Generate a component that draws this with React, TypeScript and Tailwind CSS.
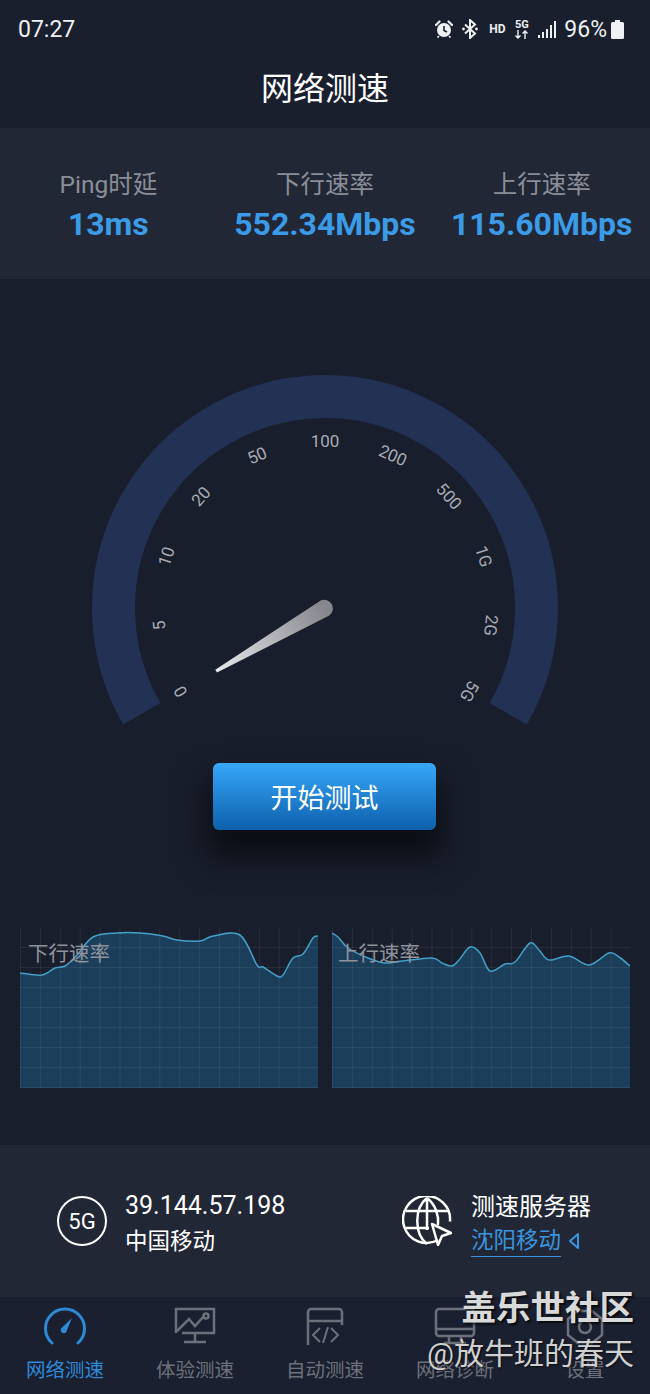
const DOWN_POINTS: [number, number][] = [
  [0, 45], [22, 47], [35, 40], [45, 38], [57, 27], [73, 9], [97, 5], [120, 5], [143, 8], [157, 12],
  [180, 13], [193, 8], [220, 7], [237, 37], [243, 39], [257, 48], [263, 47], [273, 30], [283, 26], [293, 10], [298, 8],
];

const UP_POINTS: [number, number][] = [
  [0, 5], [6, 9], [16, 20], [36, 30], [53, 35], [70, 33], [100, 30], [110, 35], [120, 38], [127, 32],
  [138, 19], [148, 25], [158, 43], [173, 36], [183, 34], [198, 15], [207, 22], [217, 32], [237, 28], [257, 37],
  [277, 25], [287, 29], [298, 38],
];

const GAUGE_LABELS = ['0', '5', '10', '20', '50', '100', '200', '500', '1G', '2G', '5G'];

function smoothPath(pts: [number, number][]) {
  let d = `M${pts[0][0]},${pts[0][1]}`;
  for (let i = 0; i < pts.length - 1; i++) {
    const p0 = pts[Math.max(i - 1, 0)];
    const p1 = pts[i];
    const p2 = pts[i + 1];
    const p3 = pts[Math.min(i + 2, pts.length - 1)];
    const c1x = p1[0] + (p2[0] - p0[0]) / 6;
    const c1y = p1[1] + (p2[1] - p0[1]) / 6;
    const c2x = p2[0] - (p3[0] - p1[0]) / 6;
    const c2y = p2[1] - (p3[1] - p1[1]) / 6;
    d += ` C${c1x},${c1y} ${c2x},${c2y} ${p2[0]},${p2[1]}`;
  }
  return d;
}

function StatusIcons() {
  return (
    <div className="flex items-center text-[#eef0f3]">
      <svg width="18" height="18" viewBox="0 0 18 18" className="mr-[9px]">
        <circle cx="9" cy="10" r="7" fill="currentColor" />
        <path d="M9 6v4.5l3 1.5" fill="none" stroke="#1a1f2e" strokeWidth="1.6" />
        <path d="M1 5l3.5-3.5M17 5l-3.5-3.5" stroke="currentColor" strokeWidth="2.2" strokeLinecap="round" />
        <path d="M4 16l-1.5 1.5M14 16l1.5 1.5" stroke="currentColor" strokeWidth="1.6" />
      </svg>
      <svg width="16" height="20" viewBox="0 0 16 20" className="mr-[11px]">
        <path d="M3 5.5l10 9-5 4.5V1l5 4.5-10 9" fill="none" stroke="currentColor" strokeWidth="2" />
        <circle cx="1.5" cy="10" r="1.4" fill="currentColor" />
        <circle cx="14.5" cy="10" r="1.4" fill="currentColor" />
      </svg>
      <span className="mr-[9px] w-[16px] text-[12px] font-bold leading-none">HD</span>
      <div className="mr-[9px] flex w-[15px] flex-col items-center">
        <span className="text-[11px] font-bold leading-[11px]">5G</span>
        <svg width="15" height="9" viewBox="0 0 15 9">
          <path d="M4 0v8M1.5 5.5L4 8l2.5-2.5M11 9V1M8.500 3.500L11 1l2.500 2.500" fill="none" stroke="currentColor" strokeWidth="1.4" />
        </svg>
      </div>
      <svg width="18" height="17" viewBox="0 0 18 17" className="mr-[8px]" fill="currentColor">
        <rect x="0" y="14" width="2" height="3" />
        <rect x="4" y="11" width="2" height="6" />
        <rect x="8" y="8" width="2" height="9" />
        <rect x="12" y="4" width="2" height="13" />
        <rect x="16" y="0" width="2" height="17" />
      </svg>
      <span className="mr-[4px] text-[23px] leading-none">96%</span>
      <svg width="13" height="19" viewBox="0 0 13 19" fill="currentColor">
        <path d="M4 0h5v2h2.500A1.500 1.500 0 0 1 13 3.500V17.500A1.500 1.500 0 0 1 11.500 19H1.500A1.500 1.500 0 0 1 0 17.500V3.500A1.500 1.500 0 0 1 1.500 2H4z" />
      </svg>
    </div>
  );
}

function Stat({ label, value }: { label: string; value: string }) {
  return (
    <div className="flex flex-col items-center pt-[5px]">
      <span className="text-[24.500px] leading-[36px] text-[#8b8e97]">{label}</span>
      <span className="text-[32px] font-bold leading-[42px] text-[#3b9be6]">{value}</span>
    </div>
  );
}

function Gauge() {
  return (
    <svg width="490" height="380" viewBox="80 365 490 380" className="mx-auto mt-[86px] block">
      <defs>
        <linearGradient id="needle" gradientUnits="userSpaceOnUse" x1="216" y1="671" x2="325" y2="608">
          <stop offset="0" stopColor="#e6e8ee" />
          <stop offset="1" stopColor="#85878d" />
        </linearGradient>
      </defs>
      <path d="M141.8,713.75 A211.5 211.5 0 1 1 508.2,713.75" fill="none" stroke="#223154" strokeWidth="43" />
      {GAUGE_LABELS.map((label, i) => (
        <text
          key={label}
          x="325"
          y="447"
          textAnchor="middle"
          fontSize="17"
          fill="#a9acb4"
          transform={`rotate(${-120 + i * 24} 325 608)`}
        >
          {label}
        </text>
      ))}
      <path d="M217,672.500 L329.300,615.500 A8.700 8.700 0 0 0 320.700,600.500 L215.300,669.700 Z" fill="url(#needle)" />
    </svg>
  );
}

function Chart({ points, label, labelClass }: { points: [number, number][]; label: string; labelClass: string }) {
  const line = smoothPath(points);
  const verticals = Array.from({ length: 16 }, (_, i) => i * 19.9);
  const horizontals = Array.from({ length: 8 }, (_, i) => 20 + i * 20);
  return (
    <div className="relative h-[160px] w-[298px]">
      <svg width="298" height="160" viewBox="0 0 298 160" className="block">
        <path d={`${line} L298,160 L0,160 Z`} fill="#1b3e5a" />
        {verticals.map((x) => (
          <line key={x} x1={x + 0.5} y1="0" x2={x + 0.5} y2="160" stroke="#ffffff" strokeOpacity="0.07" />
        ))}
        {horizontals.map((y) => (
          <line key={y} x1="0" y1={y - 0.5} x2="298" y2={y - 0.5} stroke="#ffffff" strokeOpacity="0.07" />
        ))}
        <path d={line} fill="none" stroke="#459fc8" strokeWidth="1.5" />
      </svg>
      <span className={`absolute top-[12px] text-[20.500px] leading-[28px] text-[#8f939c] ${labelClass}`}>
        {label}
      </span>
    </div>
  );
}

function NavIcon({ index }: { index: number }) {
  if (index === 0) {
    return (
      <svg width="42" height="38" viewBox="0 0 42 38" fill="none" stroke="#2c8ad6" strokeWidth="3">
        <path d="M8 36A19.500 19.500 0 1 1 34 36" strokeLinecap="round" />
        <path d="M28 11L22 25.500A3.300 3.300 0 0 1 17 21.500Z" fill="#2c8ad6" stroke="none" />
      </svg>
    );
  }
  if (index === 1) {
    return (
      <svg width="42" height="38" viewBox="0 0 42 38" fill="none" stroke="#6d707a" strokeWidth="2.500">
        <path d="M2 26V2H40V26H8" />
        <path d="M21 27V34M10 35H32" />
        <path d="M3 24L15 12L21 19L30 9" />
        <circle cx="32" cy="9" r="2.500" />
      </svg>
    );
  }
  if (index === 2) {
    return (
      <svg width="38" height="38" viewBox="0 0 38 38" fill="none" stroke="#6d707a" strokeWidth="2.500">
        <path d="M2 38V5A3 3 0 0 1 5 2H33A3 3 0 0 1 36 5V18" />
        <path d="M2 14H36" />
        <path d="M17 21L10 28L17 35M28 21L35 28L28 35M20 36L25 20" strokeWidth="2" transform="translate(-3 0)" />
      </svg>
    );
  }
  if (index === 3) {
    return (
      <svg width="42" height="38" viewBox="0 0 42 38" fill="none" stroke="#6d707a" strokeWidth="2.500">
        <rect x="2" y="2" width="38" height="27" rx="3" />
        <path d="M2 22H40M15 30V35M27 30V35M10 36H32" />
      </svg>
    );
  }
  return (
    <svg width="38" height="38" viewBox="0 0 38 38" fill="none" stroke="#6d707a" strokeWidth="2.500">
      <path d="M12 4H26L36 12V28L26 36H12L2 28V12Z" strokeLinejoin="round" />
      <circle cx="19" cy="20" r="6" />
    </svg>
  );
}

const NAV_ITEMS = ['网络测速', '体验测速', '自动测速', '网络诊断', '设置'];

export default function App() {
  return (
    <div className="relative flex h-[1394px] w-[650px] flex-col overflow-hidden bg-[#191e2c] font-[family-name:Roboto,'Noto_Sans_CJK_SC',sans-serif]">
      <div className="h-[128px] bg-[#1a1f2e]">
        <div className="flex h-[58px] items-center justify-between pl-[18px] pr-[26px]">
          <span className="text-[23px] leading-none text-[#eef0f3]">07:27</span>
          <StatusIcons />
        </div>
        <div className="pt-[1px] text-center text-[32px] leading-[60px] text-white">网络测速</div>
      </div>

      <div className="grid h-[151px] grid-cols-3 items-center bg-[#222736]">
        <Stat label="Ping时延" value="13ms" />
        <Stat label="下行速率" value="552.34Mbps" />
        <Stat label="上行速率" value="115.60Mbps" />
      </div>

      <Gauge />

      <button className="ml-[213px] mt-[18px] h-[67px] w-[223px] rounded-[6px] bg-gradient-to-b from-[#37a8fa] to-[#0d60ac] pt-[6px] text-[27px] text-white shadow-[0_22px_30px_6px_rgba(0,0,0,0.55)]">
        开始测试
      </button>

      <div className="mt-[98px] flex justify-between px-[20px]">
        <Chart points={DOWN_POINTS} label="下行速率" labelClass="left-[8px]" />
        <Chart points={UP_POINTS} label="上行速率" labelClass="left-[6px]" />
      </div>

      <div className="mt-[57px] flex h-[152px] items-center bg-[#222736] pl-[57px]">
        <div className="flex h-[50px] w-[50px] items-center justify-center rounded-full border-2 border-white text-[22px] text-white">
          5G
        </div>
        <div className="ml-[18px] w-[277px] pt-[4px] text-white">
          <div className="text-[25px] leading-[36px]">39.144.57.198</div>
          <div className="text-[22.500px] leading-[34px]">中国移动</div>
        </div>
        <svg width="50" height="50" viewBox="0 0 50 50" fill="none" stroke="#fff" strokeWidth="2.500">
          <path d="M36 44A23.500 23.500 0 1 1 48 25.500" />
          <path d="M4 15H46M2 32H27M25 2C12 12 12 38 25 48M25 2C34 9 37 20 36 29M25 2V34" />
          <path d="M30 28L49 37L40 40L36 49Z" strokeLinejoin="round" />
        </svg>
        <div className="ml-[19px] pt-[3px] text-white">
          <div className="text-[24px] leading-[36px]">测速服务器</div>
          <div className="flex items-center text-[22.500px] leading-[31px] text-[#3a94dd]">
            <span className="border-b border-[#3a94dd]">沈阳移动</span>
            <svg width="12" height="18" viewBox="0 0 12 18" fill="none" stroke="#3a94dd" strokeWidth="2" className="ml-[7px]">
              <path d="M10 2L2 9L10 16Z" strokeLinejoin="round" />
            </svg>
          </div>
        </div>
      </div>

      <div className="grid h-[97px] grid-cols-5 bg-[#1b2030]">
        {NAV_ITEMS.map((item, i) => (
          <div key={item} className="flex flex-col items-center pt-[10px]">
            <div className="flex h-[38px] items-center">
              <NavIcon index={i} />
            </div>
            <span className={`mt-[12px] text-[19.500px] leading-[28px] ${i === 0 ? 'text-[#2c8ad6]' : 'text-[#6d707a]'}`}>{item}</span>
          </div>
        ))}
      </div>

      <div className="absolute right-[16px] top-[1288px] flex flex-col items-end">
        <span className="text-[34.500px] font-bold leading-[40px] text-[#d9d9d9] [text-shadow:2px_2px_2px_rgba(0,0,0,0.7)]">盖乐世社区</span>
        <span className="mt-[6px] text-[30px] leading-[40px] text-[#d0d0d0] [text-shadow:1px_1px_2px_rgba(0,0,0,0.7)]">@放牛班的春天</span>
      </div>
    </div>
  );
}
